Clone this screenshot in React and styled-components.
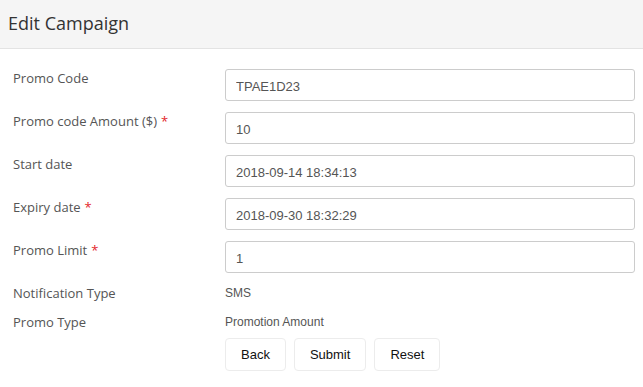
import React from "react";
import styled, { createGlobalStyle } from "styled-components";

const Global = createGlobalStyle`
  html, body { margin: 0; padding: 0; background: #fff; }
  body { font-family: "Open Sans", sans-serif; }
  * { box-sizing: border-box; }
`;

const Page = styled.div`
  width: 643px;
  height: 387px;
  background: #fff;
  display: flex;
  flex-direction: column;
`;

const Header = styled.header`
  height: 49px;
  background: #f5f5f5;
  border-bottom: 1px solid #e3e3e3;
  display: flex;
  align-items: center;
  padding: 0 8px 2px;
`;

const Title = styled.h1`
  margin: 0;
  font-family: "Open Sans", sans-serif;
  font-weight: 400;
  font-size: 18px;
  color: #333;
`;

const Form = styled.form`
  display: grid;
  grid-template-columns: 212px 410px;
  row-gap: 11px;
  padding: 20px 8px 0 13px;
`;

const Label = styled.label`
  font-family: "Open Sans", sans-serif;
  font-size: 13px;
  line-height: 18px;
  color: #555;
  align-self: ${(p) => (p.$center ? "center" : "start")};
`;

const Req = styled.span`
  color: #e3262a;
  margin-left: 4px;
`;

const Input = styled.input`
  height: 32px;
  width: 100%;
  border: 1px solid #ccc;
  border-radius: 3px;
  padding: 2px 10px 0;
  font-family: "Liberation Sans", Arial, sans-serif;
  font-size: 13px;
  color: #555;
  background: #fff;
  outline: none;
`;

const Value = styled.div`
  font-family: "Liberation Sans", Arial, sans-serif;
  font-size: 12px;
  line-height: 18px;
  color: #555;
  align-self: center;
`;

const Actions = styled.div`
  grid-column: 2;
  display: flex;
  gap: 8px;
  margin-top: -4px;
`;

const Button = styled.button`
  height: 33px;
  padding: 0 15px;
  border: 1px solid #ececec;
  border-radius: 4px;
  background: #fff;
  font-family: "Liberation Sans", Arial, sans-serif;
  font-size: 13px;
  color: #111;
  cursor: pointer;
`;

const fields = [
  { label: "Promo Code", value: "TPAE1D23" },
  { label: "Promo code Amount ($)", value: "10", req: true },
  { label: "Start date", value: "2018-09-14 18:34:13" },
  { label: "Expiry date", value: "2018-09-30 18:32:29", req: true },
  { label: "Promo Limit", value: "1", req: true },
];

export default function App() {
  return (
    <Page>
      <Global />
      <Header>
        <Title>Edit Campaign</Title>
      </Header>
      <Form onSubmit={(e) => e.preventDefault()}>
        {fields.map((f) => (
          <React.Fragment key={f.label}>
            <Label>
              {f.label}
              {f.req && <Req>*</Req>}
            </Label>
            <Input defaultValue={f.value} readOnly />
          </React.Fragment>
        ))}
        <Label $center>Notification Type</Label>
        <Value>SMS</Value>
        <Label $center>Promo Type</Label>
        <Value>Promotion Amount</Value>
        <Actions>
          <Button type="button">Back</Button>
          <Button type="submit">Submit</Button>
          <Button type="reset">Reset</Button>
        </Actions>
      </Form>
    </Page>
  );
}
